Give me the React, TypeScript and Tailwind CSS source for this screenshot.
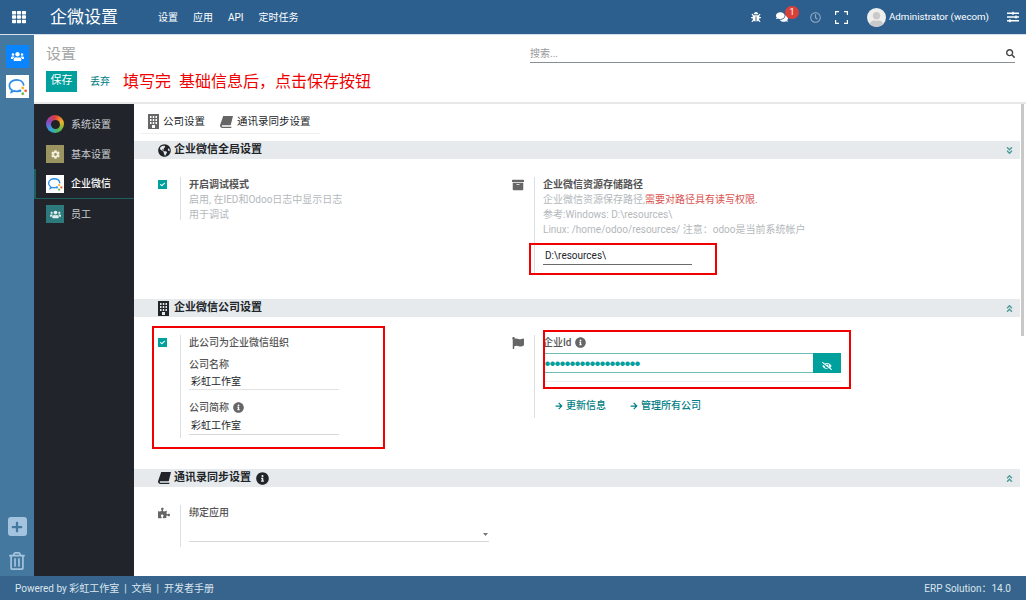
import type { ReactNode } from "react";
import {
  FaArchive,
  FaArrowRight,
  FaBug,
  FaCheck,
  FaComments,
  FaEyeSlash,
  FaFlag,
  FaGlobeAmericas,
  FaAngleDoubleDown,
  FaAngleDoubleUp,
  FaInfoCircle,
  FaPlus,
  FaPuzzlePiece,
  FaRegClock,
  FaRegTrashAlt,
  FaSearch,
  FaSlidersH,
  FaTh,
  FaUser,
  FaUsers,
  FaCog,
} from "react-icons/fa";

const FONT = "font-['Roboto','Noto_Sans_CJK_SC',sans-serif]";

function WecomIcon({ size }: { size: number }) {
  return (
    <svg width={size} height={size} viewBox="0 0 24 24">
      <rect width="24" height="24" fill="#fff" />
      <path
        d="M11 5c-4.2 0-7.500 2.700-7.500 6.100 0 1.900 1 3.500 2.600 4.600l-.5 2.200 2.600-1.300c.9.300 1.800.4 2.800.4 1.100 0 2-.2 3-.5"
        fill="none"
        stroke="#2f8fe8"
        strokeWidth="1.800"
        strokeLinecap="round"
      />
      <path d="M11 5c3.800 0 7 2.300 7.400 5.400" fill="none" stroke="#2f8fe8" strokeWidth="1.800" strokeLinecap="round" />
      <circle cx="17.500" cy="13.500" r="1.500" fill="#f5b82e" />
      <circle cx="20.500" cy="16.500" r="1.500" fill="#e8663c" />
      <circle cx="17.500" cy="19.500" r="1.500" fill="#6cbf4b" />
      <circle cx="14.500" cy="16.500" r="1.500" fill="#2f8fe8" />
    </svg>
  );
}

// 细长的楼房图标
function BuildingIcon({ className }: { className?: string }) {
  return (
    <svg className={className} width="11" height="15" viewBox="0 0 11 15">
      <path
        fill="currentColor"
        fillRule="evenodd"
        d="M0 0h11v15H0zM2 2v2h1.500V2zM4.750 2v2h1.500V2zM7.500 2v2H9V2zM2 5v2h1.500V5zM4.750 5v2h1.500V5zM7.500 5v2H9V5zM2 8v2h1.500V8zM4.750 8v2h1.500V8zM7.500 8v2H9V8zM4 11v3h3v-3z"
      />
    </svg>
  );
}

// 斜放的书本图标
function BookIcon({ className }: { className?: string }) {
  return (
    <svg className={className} width="13" height="12" viewBox="0 0 13 12">
      <path fill="currentColor" d="M3.200 0H13l-2.300 9.300H2.800c-.8 0-1 .4-1 .7 0 .3.3.7 1 .7h8.700l-.3 1.300H2.500C1 12 0 11 0 9.800c0-.3 0-.6.100-.9z" />
    </svg>
  );
}

function SectionBar({ icon, title, info, up }: { icon: ReactNode; title: string; info?: boolean; up: boolean }) {
  return (
    <div className="flex h-[18px] items-center bg-[#e7eaed] pl-6 pr-[6px] text-[#212529]">
      <span className="flex w-4 justify-start text-[13px]">{icon}</span>
      <span className="text-[11px] font-bold">{title}</span>
      {info && <FaInfoCircle className="ml-[5px] text-[13px]" />}
      <span className="ml-auto text-[9px] text-[#4a9a9a]">{up ? <FaAngleDoubleUp /> : <FaAngleDoubleDown />}</span>
    </div>
  );
}

function Checkbox() {
  return (
    <span className="mt-[3px] flex h-[9px] w-[9px] items-center justify-center bg-[#00a09d] text-[5px] text-white">
      <FaCheck />
    </span>
  );
}

function Setting({ lead, children, h }: { lead: ReactNode; children: ReactNode; h: string }) {
  return (
    <div className={`flex ${h}`}>
      <div className="w-[22px] flex-none text-[#666666]">{lead}</div>
      <div className="w-px flex-none bg-[#dcdfe2]" />
      <div className="min-w-0 flex-1 pl-2 text-[10px] leading-[15px]">{children}</div>
    </div>
  );
}

function NavItem({ icon, label, active }: { icon: ReactNode; label: string; active?: boolean }) {
  return (
    <div
      className={`flex h-[30px] items-center gap-[7px] text-[10px] ${
        active ? "border-b border-l-2 border-[#1d5e5e] pl-2.5 font-medium text-white" : "pl-3 text-[#c9ccd0]"
      }`}
    >
      <span className="flex h-[18px] w-[18px] flex-none items-center justify-center">{icon}</span>
      {label}
    </div>
  );
}

export default function App() {
  return (
    <div className={`flex h-[600px] w-[1026px] flex-col overflow-hidden bg-white ${FONT}`}>
      {/* 顶部导航 */}
      <header className="flex h-[35px] flex-none items-center border-b border-[#d5e0ea] bg-[#2c5f8d] text-white">
        <FaTh className="ml-3 text-[14px]" />
        <span className="ml-[24px] text-[17px] leading-none">企微设置</span>
        <nav className="ml-[40px] flex gap-[15px] text-[10px]">
          <span>设置</span>
          <span>应用</span>
          <span className="font-['Roboto']">API</span>
          <span>定时任务</span>
        </nav>
        <div className="ml-auto flex items-center">
          <FaBug className="text-[10px]" />
          <span className="relative ml-[15px]">
            <FaComments className="text-[12px]" />
            <span className="absolute left-[9px] top-[-5px] flex h-[13px] w-[14px] items-center justify-center rounded-full bg-[#d9403a] text-[9px]">
              1
            </span>
          </span>
          <FaRegClock className="ml-[22px] text-[11px] text-[#8fa9c2]" />
          <svg className="ml-[14px]" width="13" height="13" viewBox="0 0 13 13" fill="none" stroke="#fff" strokeWidth="1.200">
            <path d="M.6 4V.6H4M9 .6h3.400V4M12.400 9v3.400H9M4 12.400H.6V9" />
          </svg>
          <span className="ml-[19px] flex h-[19px] w-[19px] items-end justify-center overflow-hidden rounded-full bg-[#eeeeee] text-[15px] text-[#c9c9c9]">
            <FaUser />
          </span>
          <span className="ml-[3px] text-[9.750px]">Administrator (wecom)</span>
          <FaSlidersH className="ml-[18px] mr-[7px] text-[12px]" />
        </div>
      </header>

      <div className="flex min-h-0 flex-1">
        {/* 左侧应用条 */}
        <aside className="flex w-[34px] flex-none flex-col items-center bg-[#44789f] pt-[10px]">
          <div className="flex h-[23px] w-[23px] items-center justify-center bg-[#0a84ff] text-[13px] text-white">
            <FaUsers />
          </div>
          <div className="mt-[7px]">
            <WecomIcon size={23} />
          </div>
          <div className="mt-auto flex h-[19px] w-[19px] items-center justify-center rounded-[3px] bg-[#a4c3de] text-[12px] text-[#44789f]">
            <FaPlus />
          </div>
          <FaRegTrashAlt className="mb-[6px] mt-[16px] text-[18px] text-[#a4c3de]" />
        </aside>

        <div className="flex min-w-0 flex-1 flex-col">
          {/* 控制面板 */}
          <div className="h-[69px] flex-none border-b-2 border-[#e8e8e8] pl-3 pr-[11px]">
            <div className="flex items-start">
              <span className="mt-[9px] text-[15px] leading-[20px] text-[#a5a5a5]">设置</span>
              <div className="ml-auto mt-[9px] flex h-[19px] w-[485px] items-center justify-between border-b border-[#8a8f94] text-[10px] text-[#999999]">
                <span>搜索...</span>
                <FaSearch className="text-[9px] text-[#444444]" />
              </div>
            </div>
            <div className="mt-[4px] flex items-center">
              <span className="flex h-[21px] w-[31px] items-center justify-center bg-[#00a09d] text-[11px] text-white">
                保存
              </span>
              <span className="ml-[13px] text-[10px] text-[#017e84]">丢弃</span>
              <span className="ml-[13px] pt-[2px] font-['Liberation_Serif','Noto_Sans_CJK_SC',serif] text-[16px] text-[#f00000]">
                填写完&nbsp;&nbsp;基础信息后，点击保存按钮
              </span>
            </div>
          </div>

          <div className="flex min-h-0 flex-1">
            {/* 设置菜单 */}
            <aside className="w-[100px] flex-none bg-[#21252b] pt-[5px]">
              <NavItem
                label="系统设置"
                icon={
                  <span className="flex h-[18px] w-[18px] items-center justify-center rounded-full bg-[conic-gradient(#e03c3c,#f0b429,#55b947,#2fa8d8,#8a46c9,#e03c3c)]">
                    <span className="h-[9px] w-[9px] rounded-full bg-[#222222]" />
                  </span>
                }
              />
              <NavItem
                label="基本设置"
                icon={
                  <span className="flex h-[18px] w-[18px] items-center justify-center bg-[#9a9460] text-[9px] text-[#f0eedd]">
                    <FaCog />
                  </span>
                }
              />
              <NavItem active label="企业微信" icon={<WecomIcon size={18} />} />
              <NavItem
                label="员工"
                icon={
                  <span className="flex h-[18px] w-[18px] items-center justify-center bg-[#2d7a7d] text-[11px] text-[#dfeeee]">
                    <FaUsers />
                  </span>
                }
              />
            </aside>

            {/* 内容 */}
            <main className="relative min-w-0 flex-1 overflow-hidden text-[#4c4c4c]">
              <div className="mx-[6px] flex h-[30px] w-[180px] items-center border-b border-[#f0f0f0] pl-2 pt-[6px] text-[10.500px] text-[#212529]">
                <BuildingIcon className="text-[#666666]" />
                <span className="ml-[4px]">公司设置</span>
                <BookIcon className="ml-[15px] text-[#666666]" />
                <span className="ml-[4px]">通讯录同步设置</span>
              </div>

              <div className="mr-[6px] mt-[7px]">
                <SectionBar icon={<FaGlobeAmericas />} title="企业微信全局设置" up={false} />
                <div className="ml-6 mt-[18px] grid h-[122px] w-[708px] grid-cols-2">
                  <Setting h="h-[43px]" lead={<Checkbox />}>
                    <div className="font-bold text-[#555555]">开启调试模式</div>
                    <div className="text-[#b4b8bc]">启用, 在IED和Odoo日志中显示日志</div>
                    <div className="text-[#b4b8bc]">用于调试</div>
                  </Setting>
                  <Setting h="h-[97px]" lead={<FaArchive className="mt-[2px] text-[12px]" />}>
                    <div className="font-bold text-[#555555]">企业微信资源存储路径</div>
                    <div className="text-[#b4b8bc]">
                      企业微信资源保存路径,<span className="text-[#d9534f]">需要对路径具有读写权限.</span>
                    </div>
                    <div className="text-[#b4b8bc]">参考:Windows: D:\resources\</div>
                    <div className="text-[#b4b8bc]">Linux: /home/odoo/resources/ 注意：odoo是当前系统帐户</div>
                    <div className="mt-[11px] w-[149px] border-b border-[#6b6b6b] pl-[2px] pb-[1px] text-[#212529]">D:\resources\</div>
                  </Setting>
                </div>

                <SectionBar icon={<BuildingIcon />} title="企业微信公司设置" up />
                <div className="ml-6 mt-[18px] grid h-[134px] w-[708px] grid-cols-2">
                  <Setting h="h-[103px]" lead={<Checkbox />}>
                    <div className="font-medium text-[#555555]">此公司为企业微信组织</div>
                    <div className="mt-[7px] font-medium text-[#555555]">公司名称</div>
                    <div className="mt-[2px] w-[150px] border-b border-[#e3e3e3] pl-[2px] text-[#212529]">彩虹工作室</div>
                    <div className="mt-[10px] flex items-center font-medium text-[#555555]">
                      公司简称 <FaInfoCircle className="ml-[4px] text-[11px] text-[#666666]" />
                    </div>
                    <div className="mt-[3px] w-[150px] border-b border-[#d8d8d8] pb-[1px] pl-[2px] text-[#212529]">彩虹工作室</div>
                  </Setting>
                  <Setting h="h-[83px]" lead={<FaFlag className="mt-[2px] text-[12px]" />}>
                    <div className="flex items-center font-medium text-[#555555]">
                      企业Id <FaInfoCircle className="ml-[4px] text-[11px] text-[#666666]" />
                    </div>
                    <div className="mt-[3px] flex h-[20px] w-[298px]">
                      <div className="flex-1 overflow-hidden border-y border-[#6fbdbb] pl-[2px] text-[5px] leading-[18px] text-[#00a09d]">
                        ●●●●●●●●●●●●●●●●●●●
                      </div>
                      <div className="flex w-[28px] items-end justify-center bg-[#00a09d] pb-[2px] text-[10px] text-white">
                        <FaEyeSlash />
                      </div>
                    </div>
                    <div className="mt-2 h-px w-[298px] bg-[#eeeeee]" />
                    <div className="ml-3 mt-[16px] flex items-center font-medium text-[#017e84]">
                      <FaArrowRight className="text-[8px]" />
                      <span className="ml-[3px]">更新信息</span>
                      <FaArrowRight className="ml-[24px] text-[8px]" />
                      <span className="ml-[3px]">管理所有公司</span>
                    </div>
                  </Setting>
                </div>

                <SectionBar icon={<BookIcon />} title="通讯录同步设置" info up />
                <div className="ml-6 mt-[18px] w-[354px]">
                  <Setting h="h-[42px]" lead={<FaPuzzlePiece className="mt-[2px] text-[12px]" />}>
                    <div className="font-medium text-[#555555]">绑定应用</div>
                    <div className="mt-[7px] flex h-[15px] w-[300px] items-center justify-end border-b border-[#d8d8d8] pr-[1px]">
                      <svg width="5" height="3" viewBox="0 0 5 3">
                        <path d="M0 0h5L2.500 3z" fill="#777777" />
                      </svg>
                    </div>
                  </Setting>
                </div>
              </div>

              {/* 滚动条 */}
              <div className="absolute right-[2px] top-0 h-[232px] w-[3px] bg-[#c8c8c8]" />

              {/* 标注红框 */}
              <div className="absolute left-[395px] top-[139px] h-[32px] w-[188px] border-2 border-[#f00000]" />
              <div className="absolute left-[18px] top-[222px] h-[123px] w-[233px] border-2 border-[#f00000]" />
              <div className="absolute left-[409px] top-[226px] h-[59px] w-[308px] border-2 border-[#f00000]" />
            </main>
          </div>
        </div>
      </div>

      {/* 底部 */}
      <footer className="flex h-[24px] flex-none items-center justify-between bg-[#36648c] px-[15px] pt-[1px] text-[10px] text-[#dbe5ee]">
        <span>Powered by 彩虹工作室&nbsp;&nbsp;|&nbsp;&nbsp;文档&nbsp;&nbsp;|&nbsp;&nbsp;开发者手册</span>
        <span>ERP Solution：14.0</span>
      </footer>
    </div>
  );
}
